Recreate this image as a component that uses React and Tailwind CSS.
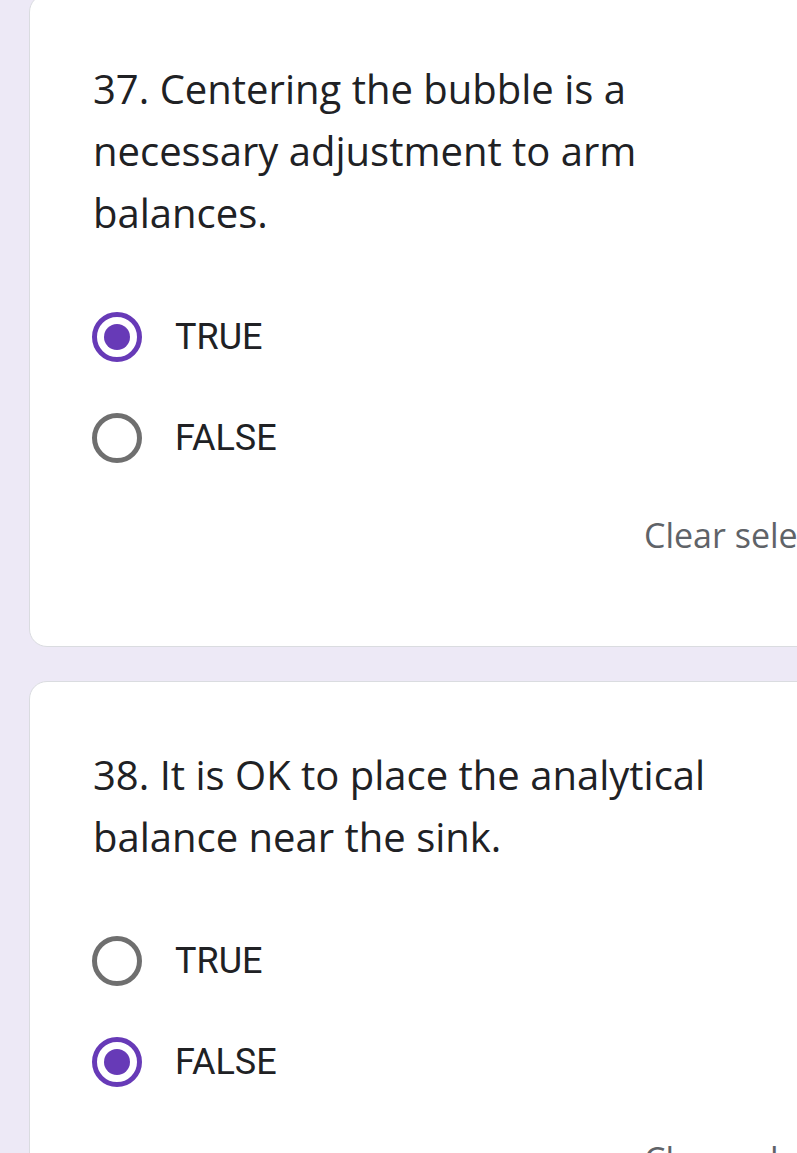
import React from "react";

function Radio({ checked }) {
  if (checked) {
    return (
      <div className="w-[50px] h-[50px] rounded-full border-[5px] border-[#673ab7] flex items-center justify-center shrink-0">
        <div className="w-[26px] h-[26px] rounded-full bg-[#673ab7]" />
      </div>
    );
  }
  return <div className="w-[50px] h-[50px] rounded-full border-[5px] border-[#6f6f6f] shrink-0" />;
}

function Option({ label, checked }) {
  return (
    <div className="flex items-center h-[101px] pl-[62px]">
      <Radio checked={checked} />
      <span
        className="ml-[33px] text-[36px] text-[#202124]"
        style={{ fontFamily: "Roboto, sans-serif" }}
      >
        {label}
      </span>
    </div>
  );
}

function Card({ lines, answer, className }) {
  return (
    <div className={"w-[860px] bg-white border border-[#dadce0] rounded-[18px] " + className}>
      <div
        className="pl-[63px] text-[40px] leading-[62px] text-[#202124]"
        style={{ fontFamily: "'Open Sans', sans-serif" }}
      >
        {lines.map((l, i) => (
          <div key={i}>{l}</div>
        ))}
      </div>
      <div className="mt-[42px]">
        <Option label="TRUE" checked={answer === true} />
        <Option label="FALSE" checked={answer === false} />
      </div>
      <div
        className="pl-[614px] mt-[16px] h-[62px] leading-[62px] text-[34px] text-[#5f6368] whitespace-nowrap"
        style={{ fontFamily: "'Open Sans', sans-serif" }}
      >
        Clear selection
      </div>
    </div>
  );
}

export default function App() {
  return (
    <div className="w-[797px] h-[1153px] overflow-hidden bg-[#ede9f6]">
      <div className="pl-[29px] -mt-[6px] flex flex-col gap-[34px]">
        <Card
          className="h-[653px] pt-[63px]"
          lines={["37. Centering the bubble is a", "necessary adjustment to arm", "balances."]}
          answer={true}
        />
        <Card
          className="h-[653px] pt-[62px]"
          lines={["38. It is OK to place the analytical", "balance near the sink."]}
          answer={false}
        />
      </div>
    </div>
  );
}
